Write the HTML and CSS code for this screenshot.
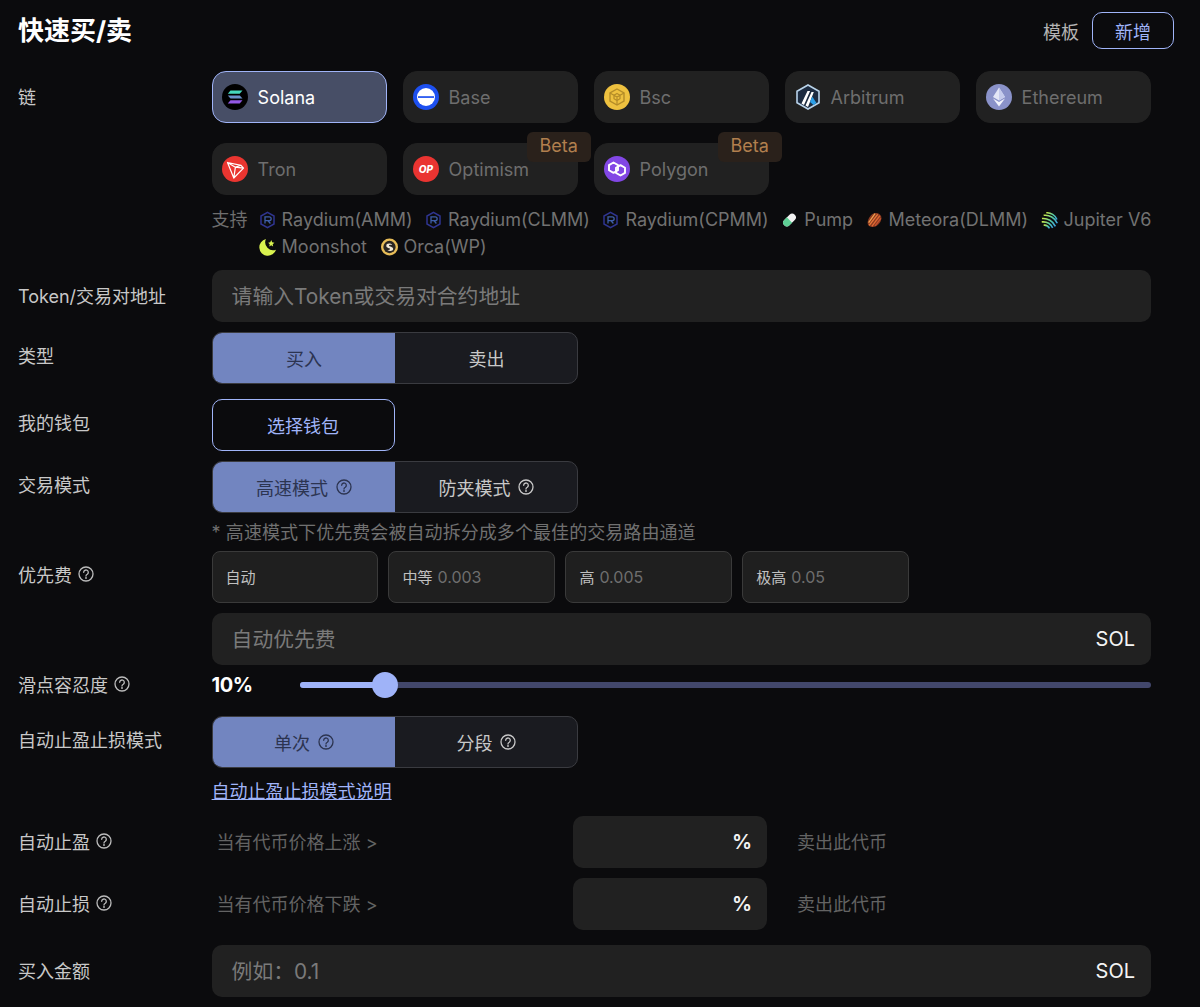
FILE: index.html
```html
<!DOCTYPE html>
<html lang="zh-CN">
<head>
<meta charset="utf-8">
<title>快速买/卖</title>
<link rel="stylesheet" href="styles.css">
</head>
<body>
<svg class="defs" width="0" height="0" aria-hidden="true">
  <defs>
    <symbol id="help" viewBox="0 0 16 16">
      <circle cx="8" cy="8" r="7" fill="none" stroke="currentColor" stroke-width="1.3"/>
      <path d="M5.700 6.300a2.300 2.300 0 1 1 3.600 1.900c-.9.500-1.300.9-1.300 1.800" fill="none" stroke="currentColor" stroke-width="1.300" stroke-linecap="round"/>
      <circle cx="8" cy="12" r=".9" fill="currentColor"/>
    </symbol>
    <symbol id="raydium" viewBox="0 0 16 18">
      <path d="M8 1.300 14.500 5v8L8 16.700 1.500 13V5z" fill="none" stroke="#2f3590" stroke-width="1.500"/>
      <path d="M5.500 12.500V5.800h4.200a1.900 1.900 0 0 1 0 3.900H5.800M8.500 9.800l2.400 2.700" fill="none" stroke="#3f5fa8" stroke-width="1.300"/>
    </symbol>
    <linearGradient id="jup" x1="0" y1="0" x2="1" y2="1">
      <stop offset="0" stop-color="#c8e84a"/><stop offset=".5" stop-color="#4fc8a8"/><stop offset="1" stop-color="#3aa0e0"/>
    </linearGradient>
  </defs>
</svg>

<main class="page">
  <header class="header">
    <h1 class="title">快速买/卖</h1>
    <div class="header-actions">
      <span class="template-label">模板</span>
      <button class="btn-outline btn-add">新增</button>
    </div>
  </header>

  <section class="row row-chain">
    <div class="label label-tall">链</div>
    <div class="content">
      <div class="chains">
        <div class="chain chain-active">
          <svg class="chain-icon" viewBox="0 0 26 26"><circle cx="13" cy="13" r="13" fill="#000"/><path d="M8.500 6.500h12l-2.800 3.300H5.800z" fill="#46d8bc"/><path d="M5.800 11.400h12l2.700 3.200h-12z" fill="#6a8fc8"/><path d="M8.500 16.200h12l-2.800 3.300H5.800z" fill="#9358e4"/></svg>
          <span>Solana</span>
        </div>
        <div class="chain">
          <svg class="chain-icon" viewBox="0 0 26 26"><circle cx="13" cy="13" r="13" fill="#1d50f0"/><circle cx="13" cy="13" r="9" fill="#fff"/><rect x="5" y="12.200" width="16" height="1.700" fill="#1d50f0"/></svg>
          <span>Base</span>
        </div>
        <div class="chain">
          <svg class="chain-icon" viewBox="0 0 26 26"><circle cx="13" cy="13" r="13" fill="#eec13f"/><path d="M13 5 20 9v8l-7 4-7-4V9z" fill="none" stroke="#b48c28" stroke-width="1.400"/><path d="M13 9.500l3 1.800v3.400l-3 1.800-3-1.800v-3.400zM6 9l7 4 7-4M13 13v8" fill="none" stroke="#b48c28" stroke-width="1.200"/></svg>
          <span>Bsc</span>
        </div>
        <div class="chain">
          <svg class="chain-icon" viewBox="0 0 26 26"><path d="M13 1 24 7.300v11.400L13 25 2 18.700V7.300z" fill="#1c2b40" stroke="#b9d3ea" stroke-width="1.600"/><path d="M6.500 19.500 12.500 7h2.600L9 21zM10.500 21.500 16.500 8h2.300L13 23z" fill="#fff"/><path d="M15 18l2.200-5.500 4.300 6.500-3 2z" fill="#2b9fe8"/></svg>
          <span>Arbitrum</span>
        </div>
        <div class="chain">
          <svg class="chain-icon" viewBox="0 0 26 26"><circle cx="13" cy="13" r="13" fill="#8a92c9"/><path d="M13 3.500 19 13l-6 3.500L7 13z" fill="#e3e6f6"/><path d="M13 3.500V16.500l6-3.500z" fill="#c5cbec"/><path d="M7 14.500l6 3.600 6-3.600-6 8z" fill="#f0f2fb"/></svg>
          <span>Ethereum</span>
        </div>
        <div class="chain">
          <svg class="chain-icon" viewBox="0 0 26 26"><circle cx="13" cy="13" r="13" fill="#ea3530"/><path d="M5.500 6.500 19 9.300l2.500 2.800L11.800 22zM5.500 6.500l6.300 15.500 1.600-10.800zM13.400 11.200 19 9.300M13.400 11.200l8.100.9" fill="none" stroke="#fff" stroke-width="1.200" stroke-linejoin="round"/></svg>
          <span>Tron</span>
        </div>
        <div class="chain">
          <svg class="chain-icon" viewBox="0 0 26 26"><circle cx="13" cy="13" r="13" fill="#ea3431"/><text class="op-text" x="13" y="17" text-anchor="middle">OP</text></svg>
          <span>Optimism</span>
          <span class="beta">Beta</span>
        </div>
        <div class="chain">
          <svg class="chain-icon" viewBox="0 0 26 26"><circle cx="13" cy="13" r="13" fill="#8247e5"/><path d="M9.500 6.500 14 9.100v5.200l-4.500 2.600L5 14.300V9.100z" fill="none" stroke="#fff" stroke-width="1.900" stroke-linejoin="round"/><path d="M16.500 9.100 21 11.700v5.200l-4.500 2.600-4.500-2.600v-5.200z" fill="none" stroke="#fff" stroke-width="1.900" stroke-linejoin="round"/></svg>
          <span>Polygon</span>
          <span class="beta">Beta</span>
        </div>
      </div>
      <div class="support">
        <span class="support-label">支持</span>
        <div class="dexes">
          <span class="dex"><svg class="dex-icon"><use href="#raydium"/></svg>Raydium(AMM)</span>
          <span class="dex"><svg class="dex-icon"><use href="#raydium"/></svg>Raydium(CLMM)</span>
          <span class="dex"><svg class="dex-icon"><use href="#raydium"/></svg>Raydium(CPMM)</span>
          <span class="dex"><svg class="dex-icon" viewBox="0 0 16 16"><g transform="rotate(45 8 8)"><rect x="4.500" y="1" width="7" height="14" rx="3.500" fill="#f2f2f2"/><path d="M4.500 8h7v3.500a3.500 3.500 0 0 1-7 0z" fill="#5fcf95"/></g></svg>Pump</span>
          <span class="dex"><svg class="dex-icon" viewBox="0 0 16 16"><path d="M9 1.500c3 0 5.500 2 5.500 4.500 0 4-4 8.500-8 8.500-3 0-5-1.500-5-3.500C1.500 7 5 1.500 9 1.500z" fill="#8a3a20"/><g fill="none" stroke-width="1.200"><path d="M2.500 10.500 8.500 2" stroke="#f0a050"/><path d="M3 13 11 2.800" stroke="#ea7a3a"/><path d="M5.500 14 13 4" stroke="#e06a34"/><path d="M8.500 13.500 14 6.500" stroke="#c85430"/></g></svg>Meteora(DLMM)</span>
          <span class="dex"><svg class="dex-icon" viewBox="0 0 16 16"><g fill="none" stroke="url(#jup)" stroke-width="1.500"><path d="M5 1.200C9 .8 13.500 3.500 15 7.500"/><path d="M2.500 3.600C7.500 2.800 13.500 6 15.300 11"/><path d="M.9 6.600C6 6 11.500 9 13.500 14"/><path d="M.7 9.800C5 9.400 9 11.500 11 15.300"/><path d="M2.500 12.900C4.800 12.600 6.800 13.700 8 15.800"/></g></svg>Jupiter V6</span>
          <span class="dex"><svg class="dex-icon" viewBox="0 0 16 16"><path d="M6.500.5a8 8 0 1 0 9.500 10A7.500 7.500 0 0 1 6.500.5z" fill="#d9f24f"/><path d="M11.500 1.500l.9 2 2.100.4-1.600 1.400.4 2.200-1.800-1.100-1.800 1.100.4-2.200-1.500-1.400 2-.4z" fill="#d9f24f"/></svg>Moonshot</span>
          <span class="dex dex-orca"><svg class="dex-icon" viewBox="0 0 16 16"><circle cx="8" cy="8" r="8" fill="#e8bd58"/><circle cx="8" cy="8" r="5.800" fill="#2a2622"/><path d="M5 5.500c2-1.500 5-1 5.500.5-1.500-.3-3-.3-3 .8 0 1 4 .8 4 3 0 2-3.500 2.500-5.500 1 1.500 0 2.500-.3 2.500-1 0-1-3.500-.8-3.500-2.800 0-.6.100-1 .5-1.500z" fill="#f2ead8"/></svg>Orca(WP)</span>
        </div>
      </div>
    </div>
  </section>

  <section class="row row-token">
    <div class="label label-tall">Token/交易对地址</div>
    <div class="content"><div class="field"><span class="placeholder">请输入Token或交易对合约地址</span></div></div>
  </section>

  <section class="row row-type">
    <div class="label">类型</div>
    <div class="content">
      <div class="segment">
        <div class="seg seg-on">买入</div>
        <div class="seg">卖出</div>
      </div>
    </div>
  </section>

  <section class="row row-wallet">
    <div class="label">我的钱包</div>
    <div class="content"><button class="btn-outline btn-wallet">选择钱包</button></div>
  </section>

  <section class="row row-mode">
    <div class="label">交易模式</div>
    <div class="content">
      <div class="segment">
        <div class="seg seg-on">高速模式<svg class="help help-seg"><use href="#help"/></svg></div>
        <div class="seg">防夹模式<svg class="help help-seg"><use href="#help"/></svg></div>
      </div>
      <p class="note">* 高速模式下优先费会被自动拆分成多个最佳的交易路由通道</p>
    </div>
  </section>

  <section class="row row-fee">
    <div class="label">优先费<svg class="help"><use href="#help"/></svg></div>
    <div class="content">
      <div class="fees">
        <div class="fee">自动</div>
        <div class="fee">中等<span class="fee-val">0.003</span></div>
        <div class="fee">高<span class="fee-val">0.005</span></div>
        <div class="fee">极高<span class="fee-val">0.05</span></div>
      </div>
      <div class="field field-fee"><span class="placeholder">自动优先费</span><span class="unit">SOL</span></div>
    </div>
  </section>

  <section class="row row-slip">
    <div class="label label-short">滑点容忍度<svg class="help"><use href="#help"/></svg></div>
    <div class="content slip">
      <span class="slip-val">10%</span>
      <div class="slider">
        <div class="slider-fill" style="width:10%"></div>
        <div class="slider-thumb" style="left:10%"></div>
      </div>
    </div>
  </section>

  <section class="row row-auto">
    <div class="label">自动止盈止损模式</div>
    <div class="content">
      <div class="segment">
        <div class="seg seg-on">单次<svg class="help help-seg"><use href="#help"/></svg></div>
        <div class="seg">分段<svg class="help help-seg"><use href="#help"/></svg></div>
      </div>
      <a class="doc-link" href="#">自动止盈止损模式说明</a>
    </div>
  </section>

  <section class="row row-tp">
    <div class="label label-tall">自动止盈<svg class="help"><use href="#help"/></svg></div>
    <div class="content rule">
      <span class="rule-text rule-when">当有代币价格上涨 &gt;</span>
      <div class="field field-pct"><span class="unit unit-pct">%</span></div>
      <span class="rule-text">卖出此代币</span>
    </div>
  </section>

  <section class="row row-sl">
    <div class="label label-tall">自动止损<svg class="help"><use href="#help"/></svg></div>
    <div class="content rule">
      <span class="rule-text rule-when">当有代币价格下跌 &gt;</span>
      <div class="field field-pct"><span class="unit unit-pct">%</span></div>
      <span class="rule-text">卖出此代币</span>
    </div>
  </section>

  <section class="row row-amount">
    <div class="label label-tall">买入金额</div>
    <div class="content"><div class="field"><span class="placeholder">例如：0.1</span><span class="unit">SOL</span></div></div>
  </section>
</main>
</body>
</html>
```

FILE: styles.css
```css
* { box-sizing: border-box; }
html, body { margin: 0; padding: 0; }
body {
  background: #0b0b0d;
  color: #c8c8c8;
  font-family: Inter, "Noto Sans CJK SC", sans-serif;
  font-size: 18px;
  overflow: hidden;
  height: 1007px;
}
.defs { position: absolute; }
.page { padding: 12px 26px 0 18px; width: 1200px; }

.header { display: flex; justify-content: space-between; align-items: center; height: 37px; }
.title { margin: 0; font-size: 26px; font-weight: 700; color: #fff; line-height: 37px; }
.header-actions { display: flex; align-items: center; gap: 13px; }
.template-label { color: #b4b4b4; }

.btn-outline {
  font: inherit;
  background: transparent;
  color: #a0b4f8;
  border: 1px solid #a0b4f8;
  border-radius: 10px;
  padding: 0;
  display: block;
}
.btn-add { width: 82px; height: 37px; }
.btn-wallet { width: 183px; height: 52px; padding-bottom: 1px; }

.row { display: flex; width: 1133px; }
.row-chain { margin-top: 22px; }
.row-token { margin-top: 10px; }
.row-type { margin-top: 10px; }
.row-wallet { margin-top: 15px; }
.row-mode { margin-top: 10px; }
.row-fee { margin-top: 0; }
.row-slip { margin-top: 0; }
.row-auto { margin-top: 11px; }
.row-tp { margin-top: 10px; }
.row-sl { margin-top: 10px; }
.row-amount { margin-top: 15px; }

.label {
  flex: 0 0 193.6px;
  height: 46px;
  display: flex;
  align-items: center;
  color: #c8c8c8;
}
.label-tall { height: 49px; }
.label-short { height: 38px; }
.content { flex: 1; min-width: 0; }

.help { width: 16px; height: 16px; margin-left: 6px; color: #bcbcbc; flex: none; }
.help-seg { margin-left: 8px; color: inherit; }

.chains { display: grid; grid-template-columns: repeat(5, 175px); gap: 20px 16px; }
.chain {
  position: relative;
  height: 52px;
  display: flex;
  align-items: center;
  gap: 10px;
  padding: 0 9px;
  background: #212121;
  border: 1px solid #212121;
  border-radius: 14px;
  color: #6e6e6e;
}
.chain-active { background: #474e66; border-color: #a0b4f8; color: #fff; }
.chain-icon { width: 26px; height: 26px; flex: none; }
.op-text { font: italic 800 10px Inter, sans-serif; fill: #fff; }
.beta {
  position: absolute;
  top: -12px;
  right: -14px;
  width: 64px;
  height: 30px;
  display: flex;
  align-items: center;
  justify-content: center;
  padding-bottom: 3px;
  background: #2a211b;
  color: #b17f4e;
  border-radius: 6px;
}

.support { display: flex; margin-top: 11px; line-height: 27px; color: #727272; width: 945px; }
.support-label { flex: 0 0 47px; color: #6e6e6e; }
.dexes { display: flex; flex-wrap: wrap; gap: 0 12.5px; width: 900px; }
.dex { display: inline-flex; align-items: center; white-space: nowrap; }
.dex-icon { width: 17px; height: 18px; margin-right: 6px; flex: none; }
.dex-orca { margin-left: 2px; }
.dex-orca .dex-icon { margin-right: 5px; }

.field {
  height: 52px;
  background: #212121;
  border-radius: 10px;
  display: flex;
  align-items: center;
  justify-content: space-between;
  padding: 0 16px 0 20px;
  font-size: 20.8px;
}
.placeholder { color: #7a7a7a; padding-bottom: 3px; }
.unit { color: #f4f4f4; font-size: 20px; }
.unit-pct { font-weight: 600; }

.segment {
  display: flex;
  width: 366px;
  height: 52px;
  border: 1px solid #3a3b40;
  border-radius: 10px;
  background: #1a1b20;
  overflow: hidden;
}
.seg {
  flex: 1;
  display: flex;
  align-items: center;
  justify-content: center;
  color: #c8c8c8;
  padding: 0 0 0 1px;
}
.seg-on { flex: 0 0 183.6px; background: #7285c0; color: #2c3450; margin: -1px 0 -1px -1px; }

.note { margin: 6px 0 0; height: 32px; line-height: 28px; color: #707070; letter-spacing: .07px; }

.fees { display: flex; gap: 10px; }
.fee {
  width: 166.9px;
  height: 52px;
  display: flex;
  align-items: center;
  padding: 0 0 1px 13px;
  background: #1f1f1f;
  border: 1px solid #3a3a3a;
  border-radius: 8px;
  font-size: 15px;
  color: #c0c0c0;
}
.fee-val { margin-left: 5px; color: #6e6e6e; font-size: 16px; }
.field-fee { margin-top: 10px; }

.slip { display: flex; align-items: center; height: 40px; }
.slip-val { flex: 0 0 88px; font-size: 20px; font-weight: 700; color: #fff; letter-spacing: -.5px; }
.slider { position: relative; flex: 1; height: 6px; border-radius: 3px; background: #42476b; }
.slider-fill { height: 6px; border-radius: 3px; background: #9fb3f8; }
.slider-thumb {
  position: absolute;
  top: 50%;
  width: 26px;
  height: 26px;
  margin: -13px 0 0 -13px;
  border-radius: 50%;
  background: #9fb3f8;
}

.doc-link {
  display: block;
  width: max-content;
  margin-top: 10px;
  line-height: 28px;
  height: 28px;
  color: #a0b4f8;
  text-decoration: underline;
}

.rule { display: flex; align-items: center; }
.rule-text { color: #636363; padding-bottom: 2px; }
.rule-when { flex: 0 0 361.4px; padding-left: 5px; }
.field-pct { width: 194px; justify-content: flex-end; padding: 0 15px; margin-right: 30px; }
```
